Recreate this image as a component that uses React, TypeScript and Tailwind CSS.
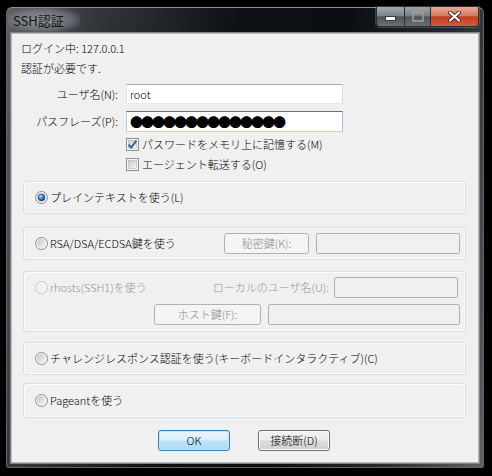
import React from "react";

function Radio({ id, checked = false, disabled = false }: { id: string; checked?: boolean; disabled?: boolean }) {
  const stroke = disabled ? "#c4c4c4" : "#8a8c8e";
  return (
    <svg width="13" height="13" viewBox="0 0 13 13" className="shrink-0">
      <defs>
        <linearGradient id={`rg-${id}`} x1="0" y1="0" x2="1" y2="1">
          <stop offset="0" stopColor={disabled ? "#ebebeb" : "#c2c2c2"} />
          <stop offset="1" stopColor={disabled ? "#f7f7f7" : "#fbfbfb"} />
        </linearGradient>
        <radialGradient id={`rd-${id}`} cx="0.35" cy="0.3" r="0.75">
          <stop offset="0" stopColor="#c0ecff" />
          <stop offset="0.45" stopColor="#3b8fe0" />
          <stop offset="1" stopColor="#0b3a80" />
        </radialGradient>
      </defs>
      <circle cx="6.5" cy="6.5" r="6" fill="#f6f6f6" stroke={stroke} />
      <circle cx="6.5" cy="6.5" r="4.5" fill={`url(#rg-${id})`} />
      {checked && <circle cx="6.5" cy="6.5" r="3.4" fill={`url(#rd-${id})`} stroke="#174a8c" strokeWidth="0.7" />}
    </svg>
  );
}

function Check({ id, checked = false }: { id: string; checked?: boolean }) {
  return (
    <svg width="13" height="13" viewBox="0 0 13 13" className="shrink-0">
      <defs>
        <linearGradient id={`cg-${id}`} x1="0" y1="0" x2="1" y2="1">
          <stop offset="0" stopColor="#c9c9c9" />
          <stop offset="1" stopColor="#f7f7f7" />
        </linearGradient>
      </defs>
      <rect x="0.5" y="0.5" width="12" height="12" fill="#f5f5f5" stroke="#8e8f8f" />
      <rect x="2.5" y="2.5" width="8" height="8" fill={`url(#cg-${id})`} stroke="#b5b7b8" strokeWidth="0.6" />
      {checked && (
        <path d="M2.6 6.6 L5.1 9.6 L10.4 2.6" stroke="#3c5a9a" strokeWidth="1.9" fill="none" strokeLinejoin="round" />
      )}
    </svg>
  );
}

function Btn({ children, kind, w }: { children: React.ReactNode; kind: "default" | "normal" | "disabled"; w: string }) {
  const cls =
    kind === "default"
      ? "border-[#3c7fb1] bg-[linear-gradient(#e9f5fc,#dbeffb_48%,#bee4fa_52%,#a9daf5)] shadow-[inset_0_0_0_1px_#c4e5f9] text-black"
      : kind === "normal"
      ? "border-[#707070] bg-[linear-gradient(#f2f2f2,#ebebeb_48%,#dddddd_52%,#cfcfcf)] shadow-[inset_0_0_0_1px_#fbfbfb] text-black"
      : "border-[#adb2b5] bg-[#f4f4f4] text-[#8a8a8a]";
  return (
    <div className={`${w} h-[21px] shrink-0 rounded-[3px] border flex items-center justify-center leading-none ${cls}`}>
      {children}
    </div>
  );
}

function DisInput({ w }: { w: string }) {
  return <div className={`${w} h-[21px] shrink-0 rounded-[2px] border border-[#afb1b3] bg-[#f0f0f0]`} />;
}

function Box({ children, cls }: { children: React.ReactNode; cls: string }) {
  return (
    <div className={`ml-[11px] w-[443px] rounded-[3px] border border-[#d5dfe5] shadow-[inset_0_0_0_1px_#fbfcfd] ${cls}`}>
      {children}
    </div>
  );
}

export default function App() {
  return (
    <div className="w-[492px] h-[476px] bg-black pt-[7px] pl-[6px] font-['Noto_Sans_CJK_JP','Noto_Sans',sans-serif] text-[11px] font-light">
      <div className="w-[478px] h-[461px] rounded-t-[6px] rounded-b-[3px] border border-[#62666a] border-t-[#8c9094] bg-[linear-gradient(100deg,#5c6064_0%,#33373b_16%,#0d1116_42%,#0b0f14_62%,#24282c_80%,#5c6064_100%)] flex flex-col">
        {/* title bar */}
        <div className="h-[24px] flex items-start justify-between">
          <div className="h-[24px] ml-[1px] pl-[5px] pr-[16px] flex items-center bg-[radial-gradient(ellipse_at_center,rgba(190,194,198,0.6),rgba(190,194,198,0.3)_55%,rgba(190,194,198,0)_82%)]">
            <span className="text-[13px] font-normal text-[#0e1216] leading-none">SSH認証</span>
          </div>
          <div className="-mt-px mr-[4px] flex h-[20px] rounded-b-[4px] border border-t-0 border-[#2a2d31] overflow-hidden shadow-[0_0_0_1px_rgba(200,200,200,0.25)]">
            <div className="w-[28px] h-full border-r border-[#2a2d31] bg-[linear-gradient(#a6aaae,#7f8489_45%,#4e5358_52%,#6c7176)] flex items-end justify-center pb-[5px]">
              <div className="w-[9px] h-[3px] bg-white border border-[#3a3e42] box-content" />
            </div>
            <div className="w-[26px] h-full border-r border-[#2a2d31] bg-[linear-gradient(#a0a4a8,#7b8085_45%,#4f5459_52%,#6a6f74)] flex items-center justify-center">
              <div className="w-[8px] h-[6px] border-2 border-t-[3px] border-[#9a9ea2] box-content opacity-80" />
            </div>
            <div className="w-[47px] h-full bg-[linear-gradient(#e9a892,#d67a62_45%,#c2401f_52%,#d45a38)] flex items-center justify-center">
              <svg width="13" height="11" viewBox="0 0 13 11">
                <path d="M2 1.5 L11 9.5 M11 1.5 L2 9.5" stroke="#3a2a2a" strokeWidth="4" strokeLinecap="round" />
                <path d="M2 1.5 L11 9.5 M11 1.5 L2 9.5" stroke="#ffffff" strokeWidth="2.2" strokeLinecap="round" />
              </svg>
            </div>
          </div>
        </div>
        {/* client ring */}
        <div className="mx-[3px] border border-[#7f8388] p-px bg-[#b7bbbf]">
          <div className="w-[466px] h-[428px] bg-[#f0f0f0] text-black flex flex-col">
            <div className="pl-[9px] pt-[4px] flex flex-col">
              <div className="h-[20px] leading-[20px]">ログイン中: 127.0.0.1</div>
              <div className="h-[20px] leading-[20px]">認証が必要です.</div>
              <div className="mt-[6px] flex items-center h-[20px]">
                <div className="w-[97px] text-right">ユーザ名(N):</div>
                <div className="ml-[8px] w-[217px] h-[20px] bg-white border border-[#abadb3] border-l-[#e2e3ea] border-r-[#dbdfe6] border-b-[#e3e9ef] pl-[3px] flex items-center">
                  root
                </div>
              </div>
              <div className="mt-[7px] flex items-center h-[21px]">
                <div className="w-[97px] text-right">パスフレーズ(P):</div>
                <div className="ml-[8px] w-[217px] h-[21px] bg-white border border-[#3d7bad] border-l-[#b5cfe7] border-r-[#9ec2e2] border-b-[#b7d9ed] pl-[3px] flex items-center overflow-hidden">
                  <span className="text-[13px] font-normal leading-none tracking-[-2px]">●●●●●●●●●●●●●●</span>
                </div>
              </div>
              <div className="mt-[2px] ml-[105px] h-[20px] flex items-center gap-[3px]">
                <Check id="c1" checked />
                <span>パスワードをメモリ上に記憶する(M)</span>
              </div>
              <div className="ml-[105px] h-[20px] flex items-center gap-[3px]">
                <Check id="c2" />
                <span>エージェント転送する(O)</span>
              </div>
            </div>

            <div className="mt-[7px]">
              <Box cls="h-[33px] pl-[11px] flex items-center gap-[2px]">
                <Radio id="r1" checked />
                <span>プレインテキストを使う(L)</span>
              </Box>
            </div>

            <div className="mt-[13px]">
              <Box cls="h-[33px] pl-[11px] flex items-center">
                <div className="w-[189px] flex items-center gap-[2px]">
                  <Radio id="r2" />
                  <span>RSA/DSA/ECDSA鍵を使う</span>
                </div>
                <Btn kind="disabled" w="w-[85px]">秘密鍵(K):</Btn>
                <div className="ml-[7px]">
                  <DisInput w="w-[144px]" />
                </div>
              </Box>
            </div>

            <div className="mt-[11px]">
              <Box cls="h-[61px] pt-[5px] flex flex-col">
                <div className="h-[21px] pl-[11px] flex items-center">
                  <div className="flex items-center gap-[2px] text-[#939393]">
                    <Radio id="r3" disabled />
                    <span>rhosts(SSH1)を使う</span>
                  </div>
                  <div className="ml-auto text-[#939393]">ローカルのユーザ名(U):</div>
                  <div className="ml-[5px] mr-[7px]">
                    <DisInput w="w-[124px]" />
                  </div>
                </div>
                <div className="mt-[6px] h-[21px] pl-[130px] flex items-center">
                  <Btn kind="disabled" w="w-[107px]">ホスト鍵(F):</Btn>
                  <div className="ml-[7px]">
                    <DisInput w="w-[192px]" />
                  </div>
                </div>
              </Box>
            </div>

            <div className="mt-[10px]">
              <Box cls="h-[33px] pl-[11px] flex items-center gap-[2px]">
                <Radio id="r4" />
                <span>チャレンジレスポンス認証を使う(キーボードインタラクティブ)(C)</span>
              </Box>
            </div>

            <div className="mt-[8px]">
              <Box cls="h-[35px] pl-[11px] flex items-center gap-[2px]">
                <Radio id="r5" />
                <span>Pageantを使う</span>
              </Box>
            </div>

            <div className="mt-[12px] pl-[146px] flex items-center gap-[28px]">
              <Btn kind="default" w="w-[72px]">OK</Btn>
              <Btn kind="normal" w="w-[72px]">接続断(D)</Btn>
            </div>
          </div>
        </div>
      </div>
    </div>
  );
}
